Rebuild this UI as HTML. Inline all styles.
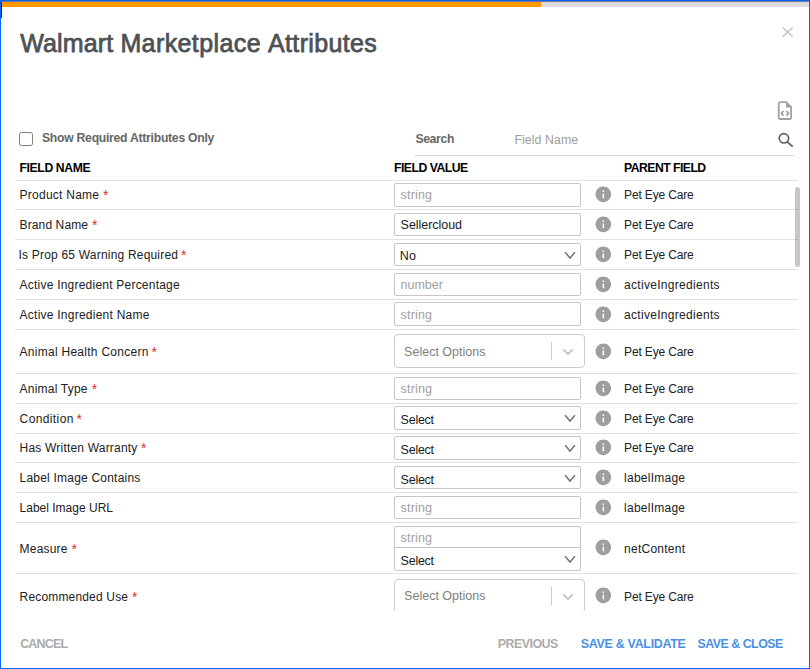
<!DOCTYPE html>
<html>
<head>
<meta charset="utf-8">
<title>Walmart Marketplace Attributes</title>
<style>
*{box-sizing:border-box;margin:0;padding:0}
html,body{width:810px;height:669px;overflow:hidden;background:#fff}
body{font-family:"Liberation Sans",sans-serif;font-size:12px;color:#212121;position:relative}
.frame{position:absolute;left:0;top:0;width:810px;height:669px;border:1px solid #0b63f6;z-index:10}
.fr2{position:absolute;left:1px;top:1px;width:808px;height:1px;background:#6d7694}
.bar{position:absolute;left:1px;top:2px;width:808px;height:5px;background:#dbdbdb}
.bar i{display:block;width:540px;height:5px;background:#ff9800}
.tick{position:absolute;left:1px;top:2px;width:1px;height:16px;background:#222}
.abs{position:absolute}
.t{position:absolute;white-space:nowrap}
.cb{left:19px;top:132px;width:14px;height:14px;border:1px solid #808080;border-radius:2.500px;background:#fff}
.sline{left:415px;top:155px;width:379px;height:1px;background:#d6d6d6}
.rl{position:absolute;left:15px;width:783px;height:1px;background:#e2e2e2}
.i{position:absolute;left:593.750px;width:18.700px;height:18.700px}
.i path{fill:#9e9e9e}
.inp{position:absolute;left:394px;width:187px;border:1px solid #c6c6c6;border-radius:2px;background:#fff}
.cv{position:absolute;left:564.100px}
.cv path{fill:none;stroke:#747474;stroke-width:1.500}
.rs{position:absolute;left:394px;width:191px;height:34px;border:1px solid #ccc;border-radius:4px;background:#fff}
.rs u{position:absolute;left:156px;top:7px;width:1px;height:18px;background:#ccc}
.rs svg{position:absolute;left:167px;top:13px}
.rs svg path{fill:none;stroke:#c8c8c8;stroke-width:2}
.mask{position:absolute;left:1px;top:611px;width:808px;height:57px;background:#fff}
.thumb{position:absolute;left:795px;top:187px;width:5px;height:80px;border-radius:3px;background:rgba(0,0,0,.22)}
</style>
</head>
<body>
<div class="bar"><i></i></div>
<div class="tick"></div>
<svg class="abs" style="left:780px;top:25px" width="16" height="14" viewBox="0 0 16 14"><path d="M2.600 2.500L12.700 11.700M12.700 2.500L2.600 11.700" stroke="#c2c2c2" stroke-width="1.500" fill="none"/></svg>
<svg class="abs" style="left:776px;top:99px" width="18" height="24" viewBox="0 0 18 24"><path d="M4.250 3.200H10.200L15.100 8.100V18.500a1.500 1.500 0 0 1-1.500 1.500H4.250a1.500 1.500 0 0 1-1.500-1.500V4.700a1.500 1.500 0 0 1 1.500-1.500z" fill="none" stroke="#a2a2a2" stroke-width="1.800" stroke-linejoin="round"/><path d="M10 3v5.400h5.300z" fill="#a2a2a2"/><path d="M7.500 12L5.400 14.300l2.100 2.300M10.400 12l2.100 2.300-2.100 2.300" fill="none" stroke="#9a9a9a" stroke-width="1.600"/></svg>
<div class="abs cb"></div>
<svg class="abs" style="left:777px;top:132px" width="18" height="17" viewBox="0 0 18 17"><circle cx="6.900" cy="6.300" r="4.700" fill="none" stroke="#606060" stroke-width="1.700"/><path d="M10.300 9.800l5.400 4.900" stroke="#606060" stroke-width="1.800"/></svg>
<div class="abs sline"></div>
<div class="rl" style="top:180px"></div>
<div class="rl" style="top:209px"></div>
<svg class="i" style="top:185.35px" viewBox="0 0 24 24"><path d="M12 2C6.480 2 2 6.480 2 12s4.480 10 10 10 10-4.480 10-10S17.520 2 12 2zm1 15h-2v-6h2v6zm0-8h-2V7h2v2z"/></svg>
<div class="inp" style="top:183px;height:24px"></div>
<div class="rl" style="top:239px"></div>
<svg class="i" style="top:214.85px" viewBox="0 0 24 24"><path d="M12 2C6.480 2 2 6.480 2 12s4.480 10 10 10 10-4.480 10-10S17.520 2 12 2zm1 15h-2v-6h2v6zm0-8h-2V7h2v2z"/></svg>
<div class="inp" style="top:213px;height:23px"></div>
<div class="rl" style="top:269px"></div>
<svg class="i" style="top:244.85px" viewBox="0 0 24 24"><path d="M12 2C6.480 2 2 6.480 2 12s4.480 10 10 10 10-4.480 10-10S17.520 2 12 2zm1 15h-2v-6h2v6zm0-8h-2V7h2v2z"/></svg>
<div class="inp" style="top:243px;height:23px"></div>
<svg class="cv" style="top:250.5px" width="13" height="9" viewBox="0 0 13 9"><path d="M1.100 1.300L6 7l5-5.800"/></svg>
<div class="rl" style="top:299px"></div>
<svg class="i" style="top:274.85px" viewBox="0 0 24 24"><path d="M12 2C6.480 2 2 6.480 2 12s4.480 10 10 10 10-4.480 10-10S17.520 2 12 2zm1 15h-2v-6h2v6zm0-8h-2V7h2v2z"/></svg>
<div class="inp" style="top:273px;height:23px"></div>
<div class="rl" style="top:329px"></div>
<svg class="i" style="top:304.85px" viewBox="0 0 24 24"><path d="M12 2C6.480 2 2 6.480 2 12s4.480 10 10 10 10-4.480 10-10S17.520 2 12 2zm1 15h-2v-6h2v6zm0-8h-2V7h2v2z"/></svg>
<div class="inp" style="top:302px;height:24px"></div>
<div class="rl" style="top:373px"></div>
<svg class="i" style="top:341.85px" viewBox="0 0 24 24"><path d="M12 2C6.480 2 2 6.480 2 12s4.480 10 10 10 10-4.480 10-10S17.520 2 12 2zm1 15h-2v-6h2v6zm0-8h-2V7h2v2z"/></svg>
<div class="rs" style="top:334px"><u></u><svg width="12" height="8" viewBox="0 0 12 8"><path d="M1.300 1.500L6 6l4.700-4.500"/></svg></div>
<div class="rl" style="top:403px"></div>
<svg class="i" style="top:378.85px" viewBox="0 0 24 24"><path d="M12 2C6.480 2 2 6.480 2 12s4.480 10 10 10 10-4.480 10-10S17.520 2 12 2zm1 15h-2v-6h2v6zm0-8h-2V7h2v2z"/></svg>
<div class="inp" style="top:377px;height:23px"></div>
<div class="rl" style="top:433px"></div>
<svg class="i" style="top:408.85px" viewBox="0 0 24 24"><path d="M12 2C6.480 2 2 6.480 2 12s4.480 10 10 10 10-4.480 10-10S17.520 2 12 2zm1 15h-2v-6h2v6zm0-8h-2V7h2v2z"/></svg>
<div class="inp" style="top:406px;height:24px"></div>
<svg class="cv" style="top:414.0px" width="13" height="9" viewBox="0 0 13 9"><path d="M1.100 1.300L6 7l5-5.800"/></svg>
<div class="rl" style="top:462px"></div>
<svg class="i" style="top:438.35px" viewBox="0 0 24 24"><path d="M12 2C6.480 2 2 6.480 2 12s4.480 10 10 10 10-4.480 10-10S17.520 2 12 2zm1 15h-2v-6h2v6zm0-8h-2V7h2v2z"/></svg>
<div class="inp" style="top:436px;height:24px"></div>
<svg class="cv" style="top:444.0px" width="13" height="9" viewBox="0 0 13 9"><path d="M1.100 1.300L6 7l5-5.800"/></svg>
<div class="rl" style="top:492px"></div>
<svg class="i" style="top:467.85px" viewBox="0 0 24 24"><path d="M12 2C6.480 2 2 6.480 2 12s4.480 10 10 10 10-4.480 10-10S17.520 2 12 2zm1 15h-2v-6h2v6zm0-8h-2V7h2v2z"/></svg>
<div class="inp" style="top:466px;height:23px"></div>
<svg class="cv" style="top:473.5px" width="13" height="9" viewBox="0 0 13 9"><path d="M1.100 1.300L6 7l5-5.800"/></svg>
<div class="rl" style="top:522px"></div>
<svg class="i" style="top:497.85px" viewBox="0 0 24 24"><path d="M12 2C6.480 2 2 6.480 2 12s4.480 10 10 10 10-4.480 10-10S17.520 2 12 2zm1 15h-2v-6h2v6zm0-8h-2V7h2v2z"/></svg>
<div class="inp" style="top:496px;height:23px"></div>
<div class="rl" style="top:573px"></div>
<svg class="i" style="top:538.35px" viewBox="0 0 24 24"><path d="M12 2C6.480 2 2 6.480 2 12s4.480 10 10 10 10-4.480 10-10S17.520 2 12 2zm1 15h-2v-6h2v6zm0-8h-2V7h2v2z"/></svg>
<div class="inp" style="top:526px;height:45px"></div>
<div class="abs" style="left:395px;top:547px;width:185px;height:1px;background:#c6c6c6"></div>
<svg class="cv" style="top:555.0px" width="13" height="9" viewBox="0 0 13 9"><path d="M1.100 1.300L6 7l5-5.800"/></svg>
<div class="rl" style="top:617px"></div>
<svg class="i" style="top:585.85px" viewBox="0 0 24 24"><path d="M12 2C6.480 2 2 6.480 2 12s4.480 10 10 10 10-4.480 10-10S17.520 2 12 2zm1 15h-2v-6h2v6zm0-8h-2V7h2v2z"/></svg>
<div class="rs" style="top:579px"><u></u><svg width="12" height="8" viewBox="0 0 12 8"><path d="M1.300 1.500L6 6l4.700-4.500"/></svg></div>
<div class="mask"></div>
<div class="thumb"></div>
<div class="t" style="left:20.20px;top:24px;font-size:25px;line-height:38px;font-weight:normal;color:#4d5156;letter-spacing:0.153px;-webkit-text-stroke:0.75px #4d5156;">Walmart</div>
<div class="t" style="left:120.40px;top:24px;font-size:25px;line-height:38px;font-weight:normal;color:#4d5156;letter-spacing:0.403px;-webkit-text-stroke:0.75px #4d5156;">Marketplace</div>
<div class="t" style="left:268.00px;top:24px;font-size:25px;line-height:38px;font-weight:normal;color:#4d5156;letter-spacing:0.355px;-webkit-text-stroke:0.75px #4d5156;">Attributes</div>
<div class="t" style="left:42.00px;top:129px;font-size:12.2px;line-height:18px;font-weight:bold;color:#666;letter-spacing:-0.262px;">Show Required Attributes Only</div>
<div class="t" style="left:415.40px;top:130px;font-size:12.2px;line-height:18px;font-weight:bold;color:#666;letter-spacing:-0.341px;">Search</div>
<div class="t" style="left:514.40px;top:131px;font-size:12.3px;line-height:18px;font-weight:normal;color:#9e9e9e;letter-spacing:0.096px;">Field Name</div>
<div class="t" style="left:19.50px;top:159px;font-size:12.2px;line-height:18px;font-weight:bold;color:#000;letter-spacing:-0.372px;">FIELD NAME</div>
<div class="t" style="left:394.00px;top:159px;font-size:12.2px;line-height:18px;font-weight:bold;color:#000;letter-spacing:-0.486px;">FIELD VALUE</div>
<div class="t" style="left:624.00px;top:159px;font-size:12.2px;line-height:18px;font-weight:bold;color:#000;letter-spacing:-0.517px;">PARENT FIELD</div>
<div class="t" style="left:20.20px;top:635px;font-size:12.4px;line-height:19px;font-weight:bold;color:#ababab;letter-spacing:-0.771px;">CANCEL</div>
<div class="t" style="left:497.70px;top:635px;font-size:12.4px;line-height:19px;font-weight:bold;color:#ababab;letter-spacing:-0.481px;">PREVIOUS</div>
<div class="t" style="left:580.70px;top:635px;font-size:12.4px;line-height:19px;font-weight:bold;color:#4a90e2;letter-spacing:-0.257px;">SAVE &amp; VALIDATE</div>
<div class="t" style="left:697.40px;top:635px;font-size:12.4px;line-height:19px;font-weight:bold;color:#4a90e2;letter-spacing:-0.488px;">SAVE &amp; CLOSE</div>
<div class="t" style="left:19.60px;top:186px;font-size:12px;line-height:18px;font-weight:normal;color:#212121;letter-spacing:0.243px;">Product Name</div>
<div class="t" style="left:103.10px;top:185px;font-size:14px;line-height:21px;font-weight:normal;color:#d93030;letter-spacing:0.000px;">*</div>
<div class="t" style="left:624.10px;top:186px;font-size:12px;line-height:18px;font-weight:normal;color:#212121;letter-spacing:-0.163px;">Pet Eye Care</div>
<div class="t" style="left:400.60px;top:186px;font-size:12.5px;line-height:19px;font-weight:normal;color:#a0a0a0;letter-spacing:0.177px;">string</div>
<div class="t" style="left:19.60px;top:216px;font-size:12px;line-height:18px;font-weight:normal;color:#212121;letter-spacing:0.112px;">Brand Name</div>
<div class="t" style="left:92.10px;top:215px;font-size:14px;line-height:21px;font-weight:normal;color:#d93030;letter-spacing:0.000px;">*</div>
<div class="t" style="left:624.10px;top:216px;font-size:12px;line-height:18px;font-weight:normal;color:#212121;letter-spacing:-0.163px;">Pet Eye Care</div>
<div class="t" style="left:400.60px;top:216px;font-size:12.5px;line-height:19px;font-weight:normal;color:#1a1a1a;letter-spacing:-0.039px;">Sellercloud</div>
<div class="t" style="left:18.60px;top:246px;font-size:12px;line-height:18px;font-weight:normal;color:#212121;letter-spacing:0.195px;">Is Prop 65 Warning Required</div>
<div class="t" style="left:181.10px;top:245px;font-size:14px;line-height:21px;font-weight:normal;color:#d93030;letter-spacing:0.000px;">*</div>
<div class="t" style="left:624.10px;top:246px;font-size:12px;line-height:18px;font-weight:normal;color:#212121;letter-spacing:-0.163px;">Pet Eye Care</div>
<div class="t" style="left:399.80px;top:247px;font-size:12.5px;line-height:19px;font-weight:normal;color:#1a1a1a;letter-spacing:0.273px;">No</div>
<div class="t" style="left:19.60px;top:276px;font-size:12px;line-height:18px;font-weight:normal;color:#212121;letter-spacing:0.221px;">Active Ingredient Percentage</div>
<div class="t" style="left:624.10px;top:276px;font-size:12px;line-height:18px;font-weight:normal;color:#212121;letter-spacing:0.299px;">activeIngredients</div>
<div class="t" style="left:400.60px;top:276px;font-size:12.5px;line-height:19px;font-weight:normal;color:#a0a0a0;letter-spacing:-0.024px;">number</div>
<div class="t" style="left:19.60px;top:306px;font-size:12px;line-height:18px;font-weight:normal;color:#212121;letter-spacing:0.240px;">Active Ingredient Name</div>
<div class="t" style="left:624.10px;top:306px;font-size:12px;line-height:18px;font-weight:normal;color:#212121;letter-spacing:0.299px;">activeIngredients</div>
<div class="t" style="left:400.60px;top:306px;font-size:12.5px;line-height:19px;font-weight:normal;color:#a0a0a0;letter-spacing:0.177px;">string</div>
<div class="t" style="left:19.60px;top:343px;font-size:12px;line-height:18px;font-weight:normal;color:#212121;letter-spacing:0.269px;">Animal Health Concern</div>
<div class="t" style="left:151.50px;top:342px;font-size:14px;line-height:21px;font-weight:normal;color:#d93030;letter-spacing:0.000px;">*</div>
<div class="t" style="left:624.10px;top:343px;font-size:12px;line-height:18px;font-weight:normal;color:#212121;letter-spacing:-0.163px;">Pet Eye Care</div>
<div class="t" style="left:404.10px;top:343px;font-size:12.5px;line-height:19px;font-weight:normal;color:#808080;letter-spacing:0.004px;">Select Options</div>
<div class="t" style="left:19.60px;top:380px;font-size:12px;line-height:18px;font-weight:normal;color:#212121;letter-spacing:0.204px;">Animal Type</div>
<div class="t" style="left:91.80px;top:379px;font-size:14px;line-height:21px;font-weight:normal;color:#d93030;letter-spacing:0.000px;">*</div>
<div class="t" style="left:624.10px;top:380px;font-size:12px;line-height:18px;font-weight:normal;color:#212121;letter-spacing:-0.163px;">Pet Eye Care</div>
<div class="t" style="left:400.60px;top:380px;font-size:12.5px;line-height:19px;font-weight:normal;color:#a0a0a0;letter-spacing:0.177px;">string</div>
<div class="t" style="left:19.60px;top:410px;font-size:12px;line-height:18px;font-weight:normal;color:#212121;letter-spacing:0.384px;">Condition</div>
<div class="t" style="left:76.50px;top:409px;font-size:14px;line-height:21px;font-weight:normal;color:#d93030;letter-spacing:0.000px;">*</div>
<div class="t" style="left:624.10px;top:410px;font-size:12px;line-height:18px;font-weight:normal;color:#212121;letter-spacing:-0.163px;">Pet Eye Care</div>
<div class="t" style="left:400.60px;top:411px;font-size:12.5px;line-height:19px;font-weight:normal;color:#1a1a1a;letter-spacing:-0.254px;">Select</div>
<div class="t" style="left:19.60px;top:439px;font-size:12px;line-height:18px;font-weight:normal;color:#212121;letter-spacing:0.194px;">Has Written Warranty</div>
<div class="t" style="left:141.10px;top:438px;font-size:14px;line-height:21px;font-weight:normal;color:#d93030;letter-spacing:0.000px;">*</div>
<div class="t" style="left:624.10px;top:439px;font-size:12px;line-height:18px;font-weight:normal;color:#212121;letter-spacing:-0.163px;">Pet Eye Care</div>
<div class="t" style="left:400.60px;top:441px;font-size:12.5px;line-height:19px;font-weight:normal;color:#1a1a1a;letter-spacing:-0.254px;">Select</div>
<div class="t" style="left:19.60px;top:469px;font-size:12px;line-height:18px;font-weight:normal;color:#212121;letter-spacing:0.208px;">Label Image Contains</div>
<div class="t" style="left:624.10px;top:469px;font-size:12px;line-height:18px;font-weight:normal;color:#212121;letter-spacing:0.241px;">labelImage</div>
<div class="t" style="left:400.60px;top:471px;font-size:12.5px;line-height:19px;font-weight:normal;color:#1a1a1a;letter-spacing:-0.254px;">Select</div>
<div class="t" style="left:19.60px;top:499px;font-size:12px;line-height:18px;font-weight:normal;color:#212121;letter-spacing:-0.001px;">Label Image URL</div>
<div class="t" style="left:624.10px;top:499px;font-size:12px;line-height:18px;font-weight:normal;color:#212121;letter-spacing:0.241px;">labelImage</div>
<div class="t" style="left:400.60px;top:499px;font-size:12.5px;line-height:19px;font-weight:normal;color:#a0a0a0;letter-spacing:0.177px;">string</div>
<div class="t" style="left:19.60px;top:540px;font-size:12px;line-height:18px;font-weight:normal;color:#212121;letter-spacing:0.181px;">Measure</div>
<div class="t" style="left:71.50px;top:539px;font-size:14px;line-height:21px;font-weight:normal;color:#d93030;letter-spacing:0.000px;">*</div>
<div class="t" style="left:624.10px;top:540px;font-size:12px;line-height:18px;font-weight:normal;color:#212121;letter-spacing:0.247px;">netContent</div>
<div class="t" style="left:400.60px;top:529px;font-size:12.5px;line-height:19px;font-weight:normal;color:#a0a0a0;letter-spacing:0.177px;">string</div>
<div class="t" style="left:400.60px;top:552px;font-size:12.5px;line-height:19px;font-weight:normal;color:#1a1a1a;letter-spacing:-0.254px;">Select</div>
<div class="t" style="left:19.60px;top:588px;font-size:12px;line-height:18px;font-weight:normal;color:#212121;letter-spacing:0.166px;">Recommended Use</div>
<div class="t" style="left:132.10px;top:587px;font-size:14px;line-height:21px;font-weight:normal;color:#d93030;letter-spacing:0.000px;">*</div>
<div class="t" style="left:624.10px;top:588px;font-size:12px;line-height:18px;font-weight:normal;color:#212121;letter-spacing:-0.163px;">Pet Eye Care</div>
<div class="t" style="left:404.10px;top:587px;font-size:12.5px;line-height:19px;font-weight:normal;color:#808080;letter-spacing:0.004px;">Select Options</div>
<div class="frame"></div><div class="fr2"></div>
</body>
</html>
